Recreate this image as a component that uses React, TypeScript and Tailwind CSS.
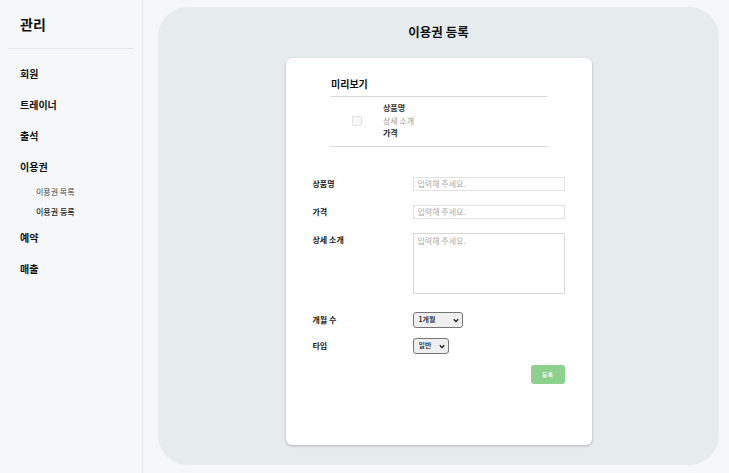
const font = { fontFamily: '"Noto Sans CJK KR", "Noto Sans", sans-serif' };

const menu = ['회원', '트레이너', '출석'];

function Row({ label, children, className = '' }: { label: string; children: React.ReactNode; className?: string }) {
  return (
    <div className={`flex ${className}`}>
      <div className="w-[100px] shrink-0 text-[8px] font-bold text-[#222] leading-[14px]">{label}</div>
      {children}
    </div>
  );
}

function Select({ value, width }: { value: string; width: string }) {
  return (
    <div className={`relative h-[16px] ${width}`}>
      <select className="block appearance-none w-full h-full border border-[#767676] rounded-[3px] bg-[#efefef] text-[7px] font-medium pl-[5px] outline-none">
        <option>{value}</option>
      </select>
      <svg className="pointer-events-none absolute right-[4px] top-[6px]" width="6" height="5" viewBox="0 0 6 5">
        <path d="M0.8 1.2 L3 3.6 L5.2 1.2" fill="none" stroke="#111" strokeWidth="1.3" />
      </svg>
    </div>
  );
}

export default function App() {
  return (
    <div className="flex h-[473px] w-full bg-[#f5f7f9] text-[#111]" style={font}>
      {/* sidebar */}
      <aside className="w-[143px] shrink-0 border-r border-[#e2e6ea] flex flex-col">
        <div className="px-5 pt-[14px] pb-[14px] text-[14px] font-bold leading-[20px]">관리</div>
        <div className="mx-2 border-t border-[#e2e5e8]" />
        <nav className="flex flex-col px-5 pt-[17px]">
          {menu.map((m) => (
            <div key={m} className="h-[31px] text-[10px] font-bold leading-[16px]">{m}</div>
          ))}
          <div className="h-[27px] text-[10px] font-bold leading-[16px]">이용권</div>
          <div className="pl-4 flex flex-col">
            <div className="h-[20px] text-[8px] text-[#444] leading-[12px]">이용권 목록</div>
            <div className="h-[24px] text-[8px] font-medium text-[#222] leading-[12px]">이용권 등록</div>
          </div>
          <div className="h-[31px] text-[10px] font-bold leading-[16px]">예약</div>
          <div className="h-[31px] text-[10px] font-bold leading-[16px]">매출</div>
        </nav>
      </aside>

      {/* main */}
      <main className="flex-1 pt-[7px] pl-[15px] pr-[10px] pb-[8px]">
        <div className="h-full rounded-[30px] bg-[#e6ebed] flex flex-col items-center">
          <h1 className="mt-[16px] text-[12.5px] font-bold leading-[18px]">이용권 등록</h1>
          <div className="mt-[17px] w-[306px] h-[387px] rounded-[6px] bg-white shadow-[0_1px_3px_rgba(0,0,0,0.25)] px-[27px] pt-[18px]">
            {/* preview */}
            <div className="mx-auto w-[217px]">
              <div className="text-[10px] font-bold leading-[16px] px-[1px] pb-[4px]">미리보기</div>
              <div className="border-t border-[#d8d8d8]" />
              <div className="flex items-center pt-[5px] pb-[6px]">
                <div className="ml-[22px] w-[10px] h-[10px] rounded-[2px] border border-[#e0e0e0] bg-[#f7f7f7]" />
                <div className="ml-[21px] flex flex-col text-[8px] leading-[12.5px]">
                  <span className="font-bold text-[#333]">상품명</span>
                  <span className="text-[#999]">상세 소개</span>
                  <span className="font-bold text-[#222]">가격</span>
                </div>
              </div>
              <div className="border-t border-[#d8d8d8]" />
            </div>

            {/* form */}
            <div className="mt-[30px] flex flex-col">
              <Row label="상품명">
                <input
                  placeholder="입력해 주세요."
                  className="w-[153px] h-[14px] border border-[#e2e2e2] px-[4px] text-[8px] placeholder:text-[#aaa] outline-none"
                />
              </Row>
              <Row label="가격" className="mt-[14px]">
                <input
                  placeholder="입력해 주세요."
                  className="w-[153px] h-[14px] border border-[#e2e2e2] px-[4px] text-[8px] placeholder:text-[#aaa] outline-none"
                />
              </Row>
              <Row label="상세 소개" className="mt-[14px]">
                <textarea
                  placeholder="입력해 주세요."
                  className="w-[153px] h-[61px] border border-[#d8d8d8] px-[4px] py-[1px] text-[8px] placeholder:text-[#aaa] outline-none resize-none"
                />
              </Row>
              <Row label="개월 수" className="mt-[18px] items-center">
                <Select value="1개월" width="w-[50px]" />
              </Row>
              <Row label="타입" className="mt-[10px] items-center">
                <Select value="일반" width="w-[36px]" />
              </Row>
              <div className="mt-[11px] flex justify-end">
                <button className="w-[34px] h-[19px] rounded-[3px] bg-[#8dd18f] text-white text-[6px]">등록</button>
              </div>
            </div>
          </div>
        </div>
      </main>
    </div>
  );
}
